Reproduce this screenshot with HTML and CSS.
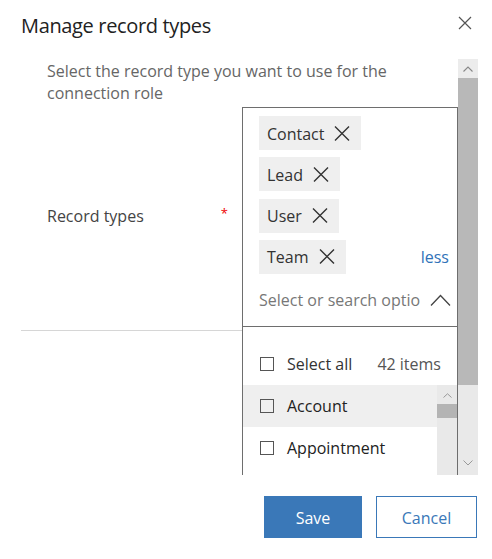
FILE: index.html
```html
<!DOCTYPE html>
<html>
<head>
<meta charset="utf-8">
<link rel="stylesheet" href="styles.css">
</head>
<body>
<div class="dialog">
  <header class="head">
    <h1 class="title">Manage record types</h1>
    <span class="close">
      <svg width="14" height="14" viewBox="0 0 14 14"><path d="M1 1L13 13M13 1L1 13" stroke="#555" stroke-width="1.2" fill="none"/></svg>
    </span>
  </header>
  <div class="body">
    <div class="pane">
      <p class="desc">Select the record type you want to use for the connection role</p>
      <div class="field">
        <div class="label-col">
          <span class="label">Record types</span>
          <span class="req">*</span>
        </div>
        <div class="combo">
          <div class="tags">
            <div class="tag-row"><span class="tag">Contact<svg class="tx" width="16" height="15" viewBox="0 0 16 15"><path d="M1 0.5L15 14.5M15 0.5L1 14.5" stroke="#333" stroke-width="1.4" fill="none"/></svg></span></div>
            <div class="tag-row"><span class="tag">Lead<svg class="tx" width="16" height="15" viewBox="0 0 16 15"><path d="M1 0.5L15 14.5M15 0.5L1 14.5" stroke="#333" stroke-width="1.4" fill="none"/></svg></span></div>
            <div class="tag-row"><span class="tag">User<svg class="tx" width="16" height="15" viewBox="0 0 16 15"><path d="M1 0.5L15 14.5M15 0.5L1 14.5" stroke="#333" stroke-width="1.4" fill="none"/></svg></span></div>
            <div class="tag-row"><span class="tag">Team<svg class="tx" width="16" height="15" viewBox="0 0 16 15"><path d="M1 0.5L15 14.5M15 0.5L1 14.5" stroke="#333" stroke-width="1.4" fill="none"/></svg></span><a class="less">less</a></div>
          </div>
          <div class="search">
            <span class="ph">Select or search optio</span>
            <svg class="chev" width="21" height="12" viewBox="0 0 21 12"><path d="M1 11.5L10.5 1.5L20 11.5" stroke="#444" stroke-width="1.3" fill="none"/></svg>
          </div>
          <div class="list">
            <div class="row all"><span class="cb"></span><span class="rtext">Select all</span><span class="count">42 items</span></div>
            <div class="items-wrap">
              <div class="items">
                <div class="row hl"><span class="cb"></span><span class="rtext dark">Account</span></div>
                <div class="row"><span class="cb"></span><span class="rtext dark">Appointment</span></div>
              </div>
              <div class="iscroll">
                <span class="iup"><svg width="9" height="5" viewBox="0 0 9 5"><path d="M0.5 4.5L4.5 0.8L8.5 4.5" stroke="#999" stroke-width="1" fill="none"/></svg></span>
                <span class="ithumb"></span>
              </div>
            </div>
          </div>
        </div>
      </div>
    </div>
    <div class="vscroll">
      <span class="up"><svg width="10" height="6" viewBox="0 0 10 6"><path d="M0.5 5.5L5 1L9.5 5.5" stroke="#888" stroke-width="1.1" fill="none"/></svg></span>
      <span class="thumb"></span>
      <span class="track"></span>
      <span class="down"><svg width="10" height="6" viewBox="0 0 10 6"><path d="M0.5 0.5L5 5L9.5 0.5" stroke="#999" stroke-width="1" fill="none"/></svg></span>
    </div>
  </div>
  <footer class="foot">
    <button class="btn primary">Save</button>
    <button class="btn secondary">Cancel</button>
  </footer>
</div>
</body>
</html>
```
FILE: styles.css
```css
* { box-sizing: border-box; }
html, body { margin: 0; padding: 0; background: #fff; }
body {
  font-family: "Open Sans", "Noto Sans", "Liberation Sans", sans-serif;
  color: #333;
  width: 492px;
  height: 559px;
  overflow: hidden;
}
.dialog { display: flex; flex-direction: column; }
.head {
  height: 59px;
  display: flex;
  justify-content: space-between;
  align-items: flex-start;
  padding: 0 20px 0 21px;
}
.title {
  margin: 12px 0 0;
  font-size: 20px;
  letter-spacing: -0.35px;
  font-weight: 400;
  color: #222;
  line-height: 28px;
}
.close { margin-top: 16px; display: flex; }
.body {
  display: flex;
  height: 416px;
  margin-left: 21px;
  width: 457px;
}
.pane { width: 437px; height: 416px; overflow: hidden; }
.desc {
  margin: 1px 0 0;
  padding: 0 30px 0 26px;
  font-size: 16px;
  line-height: 22px;
  color: #666;
}
.field { display: flex; margin-top: 3px; align-items: flex-start; }
.label-col {
  width: 221px;
  height: 224px;
  border-bottom: 1px solid #d6d6d6;
  display: flex;
  align-items: center;
  justify-content: space-between;
  padding: 0 14px 6px 26px;
}
.label { font-size: 16px; color: #444; }
.req { color: #e00; font-size: 13px; margin-top: -6px; }
.combo {
  width: 216px;
  height: 420px;
  border: 1px solid #6e6e6e;
  border-bottom: none;
  display: flex;
  flex-direction: column;
}
.tags {
  display: flex;
  flex-direction: column;
  gap: 7.33px;
  padding: 8px 8px 0 16px;
}
.tag-row { display: flex; align-items: center; justify-content: space-between; }
.tag {
  height: 34px;
  background: #efefef;
  display: inline-flex;
  align-items: center;
  gap: 10px;
  padding: 1px 11px 0 8px;
  font-size: 16px;
  color: #333;
}
.tx { display: block; margin-top: -1px; }
.less { color: #2f72b8; font-size: 16px; padding-top: 1px; }
.search {
  height: 53px;
  display: flex;
  align-items: center;
  justify-content: space-between;
  padding: 0 6px 0 16px;
  border-bottom: 1px solid #6e6e6e;
}
.ph { font-size: 16px; color: #777; }
.chev { display: block; }
.list { padding-top: 16px; }
.row {
  height: 42px;
  display: flex;
  align-items: center;
  padding: 0 16px 0 17px;
  font-size: 16px;
}
.cb {
  width: 14px;
  height: 14px;
  border: 1px solid #555;
  margin-right: 13px;
  flex: none;
}
.rtext { color: #333; }
.rtext.dark { color: #222; }
.count { margin-left: auto; color: #555; }
.items-wrap { display: flex; height: 120px; }
.items { flex: 1; }
.hl { background: #efefef; }
.iscroll {
  width: 20px;
  background: #e9e9e9;
  display: flex;
  flex-direction: column;
  align-items: center;
}
.iup { height: 19px; display: flex; align-items: center; justify-content: center; padding-top: 2px; }
.ithumb { width: 20px; height: 14px; background: #b4b4b4; }
.vscroll {
  width: 20px;
  height: 416px;
  display: flex;
  flex-direction: column;
}
.up {
  height: 19px;
  background: #ececec;
  display: flex;
  align-items: center;
  justify-content: center;
}
.thumb { height: 307px; background: #b8b8b8; }
.track { flex: 1; background: #e9e9e9; }
.down {
  height: 20px;
  background: #e9e9e9;
  display: flex;
  align-items: center;
  justify-content: center;
  padding-bottom: 4px;
}
.foot {
  display: flex;
  justify-content: flex-end;
  gap: 14px;
  padding: 21px 15px 0 0;
}
.btn {
  height: 42px;
  font-family: inherit;
  font-size: 16px;
  padding: 2px 0 0;
  cursor: pointer;
}
.primary {
  width: 98px;
  background: #3a78b8;
  color: #fff;
  border: 1px solid #3a78b8;
}
.secondary {
  width: 101px;
  background: #fff;
  color: #3a78b8;
  border: 1px solid #3a78b8;
}
```
